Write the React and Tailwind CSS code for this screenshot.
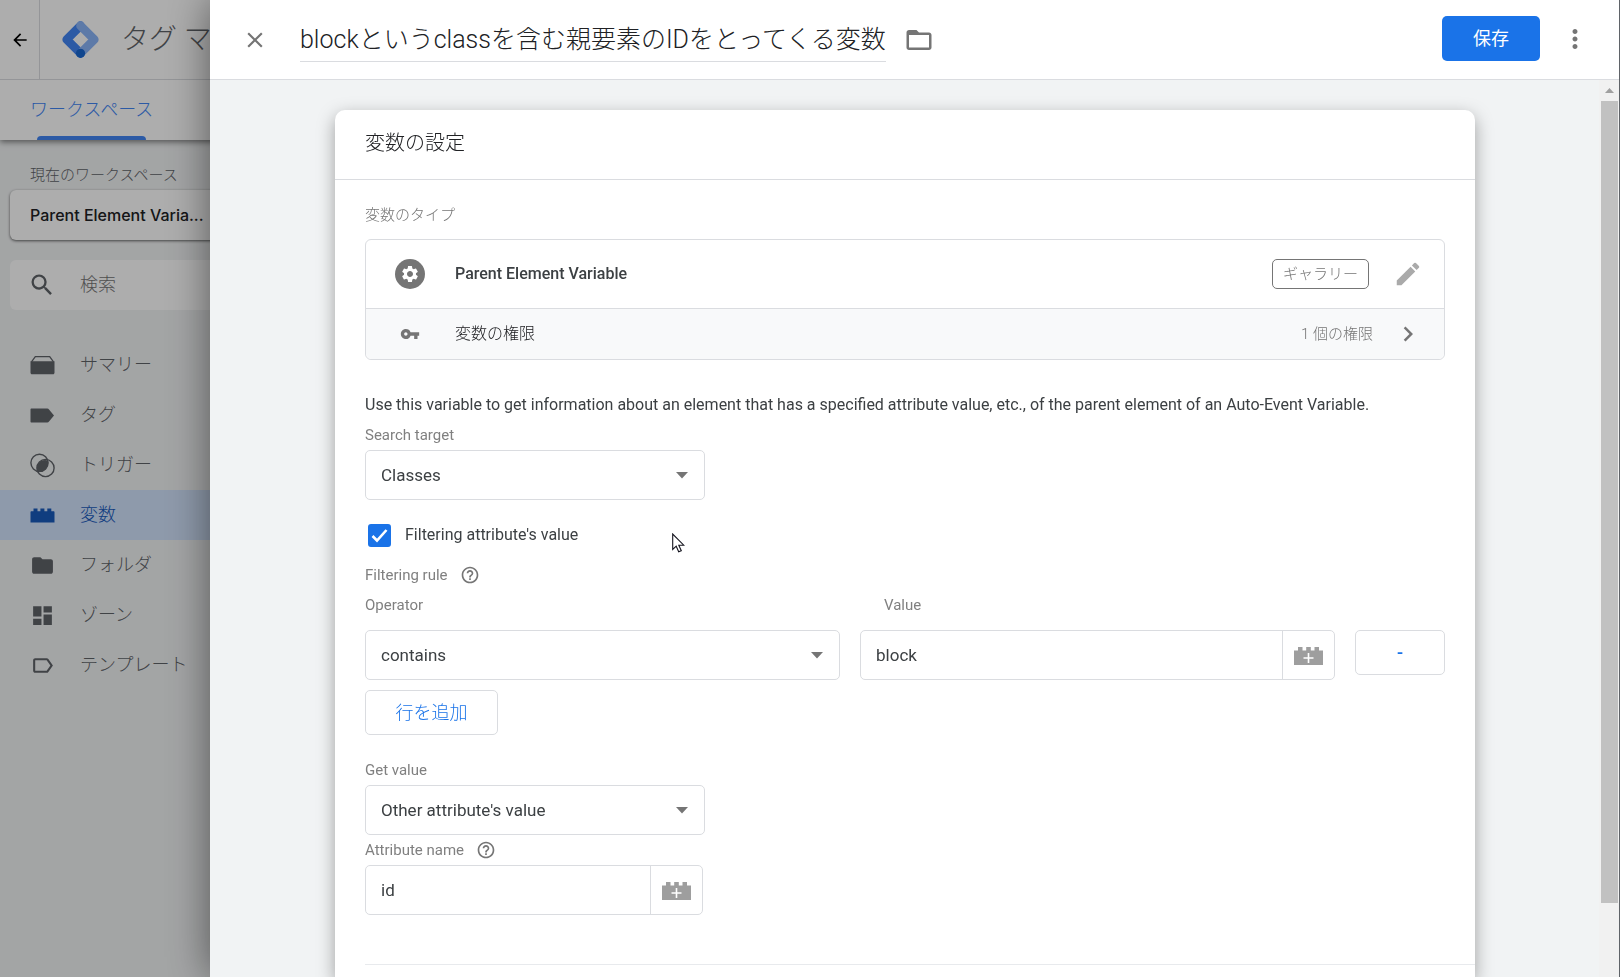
import { useState } from "react";
import {
  MdArrowBack,
  MdChevronRight,
  MdClose,
  MdDashboard,
  MdEdit,
  MdFolder,
  MdFolderOpen,
  MdHelpOutline,
  MdLabelOutline,
  MdMoreVert,
  MdSearch,
  MdSettings,
  MdVpnKey,
} from "react-icons/md";

const TagManagerLogo = () => (
  <svg width="41" height="41" viewBox="0 0 38 38" fill="none" strokeWidth="8" strokeLinecap="round" strokeLinejoin="round" aria-hidden="true">
    <path d="M19 6.2 6.2 19 19 31.8" stroke="#4285f4" />
    <path d="M19 6.2 31.8 19 19 31.8" stroke="#8ab4f8" />
    <circle cx="19" cy="31.8" r="4.300" fill="#1967d2" />
  </svg>
);

const SummaryIcon = () => (
  <svg width="25" height="25" viewBox="0 0 25 25" aria-hidden="true">
    <path d="M1.500 8.800 5.300 3.700h14.400l3.800 5.100" fill="none" stroke="currentColor" strokeWidth="1.300" />
    <path d="M.5 8.300h24v11.400c0 .9-.6 1.500-1.500 1.500H2c-.9 0-1.500-.6-1.500-1.500z" fill="currentColor" />
  </svg>
);

const TagIcon = () => (
  <svg width="25" height="25" viewBox="0 0 25 25" aria-hidden="true">
    <path d="M.5 6.500c0-.6.4-1 1-1h15.800c.7 0 1.300.3 1.700.9l5 6.100-5 6.100c-.4.600-1 .9-1.700.9H1.500c-.6 0-1-.4-1-1z" fill="currentColor" />
  </svg>
);

const TriggerIcon = () => (
  <svg width="25" height="25" viewBox="0 0 25 25" aria-hidden="true">
    <g fill="none" stroke="currentColor" strokeWidth="1.400">
      <circle cx="9.500" cy="9.800" r="8.600" />
      <circle cx="15.500" cy="15" r="8.600" />
    </g>
    <path d="M18 7.500c.8 4.200-.7 8.200-4.500 10.500-2.200.9-4.500.9-6.500.2-.6-4.400 1-8.200 4.200-10.400 2.200-1 4.700-1.100 6.800-.3z" fill="currentColor" />
  </svg>
);

const BrickIcon = () => (
  <svg width="25" height="25" viewBox="0 0 25 25" aria-hidden="true">
    <path d="M.5 9.200c0-.6.4-1 1-1H3.500V5.400h4v2.800h2.900V5.400h4v2.800h2.900V5.400h4v2.800h2.200c.6 0 1 .4 1 1V19.400H.5z" fill="currentColor" />
  </svg>
);

const BrickPlusIcon = () => (
  <svg width="29" height="18" viewBox="0 0 29 18" aria-hidden="true">
    <path d="M0 3.500h4V0h4.500v3.500h3.700V0h4.600v3.500h3.700V0H25v3.500h4V18H0z" fill="#9e9e9e" />
    <path d="M14.500 6v10M9.500 11h10" stroke="#fff" strokeWidth="1.600" />
  </svg>
);

const NAV = [
  { label: "サマリー", icon: SummaryIcon },
  { label: "タグ", icon: TagIcon },
  { label: "トリガー", icon: TriggerIcon },
  { label: "変数", icon: BrickIcon, active: true },
  { label: "フォルダ", icon: MdFolder },
  { label: "ゾーン", icon: MdDashboard },
  { label: "テンプレート", icon: MdLabelOutline },
];

const Workspace = () => (
  <div className="flex h-full flex-col bg-[#f1f3f4]">
    <header className="relative bg-white shadow-[0_2px_6px_rgba(0,0,0,0.5)]">
      <div className="flex h-20 items-center border-b border-[#dadce0]">
        <button type="button" aria-label="戻る" className="flex h-full w-10 shrink-0 items-center justify-center border-r border-[#dadce0] text-black">
          <MdArrowBack size={20} />
        </button>
        <div className="flex items-center gap-5 whitespace-nowrap pl-5">
          <TagManagerLogo />
          <span className="text-[28px] font-light text-[#5f6368]">タグ マネージャー</span>
        </div>
      </div>
      <nav className="flex h-[60px] px-[30px]">
        <a href="#workspace" className="flex flex-col items-center justify-between whitespace-nowrap text-lg font-light text-[#4285f4]">
          <span className="pt-4">ワークスペース</span>
          <span className="h-1 w-[109px] rounded-t bg-[#4285f4]" />
        </a>
      </nav>
    </header>

    <aside className="w-[300px] pt-5">
      <p className="flex h-[30px] items-center px-[30px] text-[15px] font-light text-[#5f6368]">現在のワークスペース</p>
      <div className="px-2.5">
        <button type="button" className="flex h-[50px] w-full items-center whitespace-nowrap rounded-md bg-white px-5 font-['Inter','Roboto',sans-serif] text-base font-medium text-[#202124] shadow-[0_1px_3px_rgba(0,0,0,0.6)]">
          Parent Element Varia...
        </button>
        <label className="mt-5 flex h-[50px] items-center gap-6 rounded-md bg-white pl-[18px] text-[#5f6368]">
          <MdSearch size={28} className="shrink-0" />
          <input type="text" aria-label="検索" placeholder="検索" className="min-w-0 flex-1 bg-transparent text-lg font-light outline-none placeholder:text-[#757575]" />
        </label>
      </div>
      <ul className="mt-[30px]">
        {NAV.map(({ label, icon: Icon, active }) => (
          <li key={label}>
            <a
              href="#nav"
              className={
                active
                  ? "flex h-[50px] items-center gap-[25px] bg-[#d2e3fc] px-[30px] text-lg font-light text-[#185abc]"
                  : "flex h-[50px] items-center gap-[25px] px-[30px] text-lg font-light text-[#5f6368]"
              }
            >
              <Icon size={25} />
              {label}
            </a>
          </li>
        ))}
      </ul>
    </aside>
  </div>
);

const FieldLabel = ({ htmlFor, help, children }) => (
  <div className="flex h-[30px] items-center gap-3 text-[15px] text-[#808080]">
    <label htmlFor={htmlFor}>{children}</label>
    {help && (
      <button type="button" aria-label="ヘルプ" className="text-[#757575]">
        <MdHelpOutline size={20} />
      </button>
    )}
  </div>
);

const Select = ({ id, value }) => (
  <div className="relative">
    <select id={id} defaultValue={value} className="h-[50px] w-full appearance-none rounded-[5px] border border-[#dadce0] bg-white px-[15px] pt-0.5 text-[17px] text-[#3c4043] outline-none">
      <option>{value}</option>
    </select>
    <svg width="12" height="7" viewBox="0 0 12 7" className="pointer-events-none absolute right-[17px] top-[22px]" aria-hidden="true">
      <path d="M0 0h12L6 6.500z" fill="#757575" />
    </svg>
  </div>
);

const VariableInput = ({ id, value }) => (
  <div className="flex h-[50px] rounded-[5px] border border-[#dadce0]">
    <input id={id} type="text" defaultValue={value} className="min-w-0 flex-1 bg-transparent px-[15px] pt-0.5 text-[17px] text-[#3c4043] outline-none" />
    <button type="button" aria-label="変数を選択" className="flex w-[52px] items-center justify-center border-l border-[#dadce0] pt-0.5">
      <BrickPlusIcon />
    </button>
  </div>
);

const DrawerHeader = () => (
  <header className="flex h-20 shrink-0 items-center border-b border-[#dadce0] bg-white pb-0.5 pl-8 pr-[29px]">
    <button type="button" aria-label="閉じる" className="pt-0.5 text-[#757575]">
      <MdClose size={26} />
    </button>
    <input
      type="text"
      aria-label="変数名"
      defaultValue="blockというclassを含む親要素のIDをとってくる変数"
      className="ml-8 h-[47px] border-b border-[#dadce0] pb-0.5 text-[25px] font-light text-[#202124] outline-none field-sizing-content"
    />
    <button type="button" aria-label="フォルダに移動" className="ml-[18px] pt-0.5 text-[#757575]">
      <MdFolderOpen size={30} />
    </button>
    <button type="button" className="ml-auto h-[45px] w-[98px] rounded-[5px] bg-[#1a73e8] text-lg text-white">保存</button>
    <button type="button" aria-label="その他の操作" className="ml-5 text-[#757575]">
      <MdMoreVert size={30} />
    </button>
  </header>
);

const TypeBox = () => (
  <div className="mt-[9px] rounded-md border border-[#dadce0]">
    <div className="flex h-[68px] items-center px-[29px]">
      <span className="flex size-[30px] items-center justify-center rounded-full bg-[#757575] text-white">
        <MdSettings size={20} />
      </span>
      <span className="ml-[30px] text-base font-medium text-[#3c4043]">Parent Element Variable</span>
      <span className="ml-auto flex h-[30px] items-center rounded-[5px] border border-[#757575] px-2.5 text-[15px] font-light text-[#757575]">ギャラリー</span>
      <button type="button" aria-label="編集" className="-mr-2 ml-6 text-[#aaa]">
        <MdEdit size={30} />
      </button>
    </div>
    <button type="button" className="flex h-[51px] w-full items-center rounded-b-md border-t border-[#dadce0] bg-[#f8f9fa] px-[29px] text-left">
      <span className="flex w-[30px] justify-center text-[#757575]">
        <MdVpnKey size={20} />
      </span>
      <span className="ml-[30px] text-base font-light text-[#202124]">変数の権限</span>
      <span className="ml-auto text-[15px] font-light text-[#757575]">1 個の権限</span>
      <MdChevronRight size={30} className="-mr-2 ml-5 text-[#757575]" />
    </button>
  </div>
);

const Scrollbar = () => (
  <div className="flex w-5 shrink-0 flex-col bg-[#f1f1f1] pl-0.5 pr-px" aria-hidden="true">
    <div className="flex h-[21px] shrink-0 items-center justify-center">
      <svg width="9" height="5" viewBox="0 0 9 5">
        <path d="M0 5h9L4.500 0z" fill="#a0a0a0" />
      </svg>
    </div>
    <div className="flex-[802] bg-[#c1c1c1]" />
    <div className="flex-[74]" />
  </div>
);

const VariableDrawer = () => {
  const [filtering, setFiltering] = useState(true);

  return (
    <section className="flex min-w-0 flex-1 flex-col border-r border-[#5f6368] bg-[#f1f3f4] shadow-[0_0_40px_rgba(0,0,0,0.5)]">
      <DrawerHeader />
      <div className="flex min-h-0 flex-1">
        <main className="flex min-w-0 flex-1 flex-col overflow-hidden pl-[125px] pr-[124px] pt-[30px]">
          <div className="flex-1 shrink-0 rounded-t-[10px] bg-white shadow-[0_6px_18px_rgba(0,0,0,0.35)]">
            <h2 className="flex h-[70px] items-center border-b border-[#dadce0] px-[30px] pb-1 text-xl font-light text-[#202124]">変数の設定</h2>
            <div className="pl-[30px]">
              <div className="pr-[30px] pt-5">
                <p className="flex h-[30px] items-center text-[15px] font-light text-[#757575]">変数のタイプ</p>
                <TypeBox />
                <p className="mt-[30px] flex h-[30px] items-center text-base text-[#3c4043]">
                  Use this variable to get information about an element that has a specified attribute value, etc., of the parent element of an Auto-Event Variable.
                </p>

                <FieldLabel htmlFor="search-target">Search target</FieldLabel>
                <div className="w-[340px]">
                  <Select id="search-target" value="Classes" />
                </div>

                <div className="relative mt-2.5 flex h-[50px] items-center gap-3.5 pl-[3px]">
                  <span className="relative flex">
                    <input
                      id="filtering"
                      type="checkbox"
                      checked={filtering}
                      onChange={(e) => setFiltering(e.target.checked)}
                      className="peer size-[23px] appearance-none rounded-[3px] border-2 border-[#757575] checked:border-[#1a73e8] checked:bg-[#1a73e8]"
                    />
                    <svg width="23" height="23" viewBox="0 0 23 23" className="pointer-events-none absolute inset-0 hidden peer-checked:block" aria-hidden="true">
                      <path d="m4.500 12 4.500 4.500L18.500 6" fill="none" stroke="#fff" strokeWidth="2.600" />
                    </svg>
                  </span>
                  <label htmlFor="filtering" className="text-base text-[#3c4043]">Filtering attribute's value</label>
                  {/* mouse pointer */}
                  <svg width="13" height="20" viewBox="0 0 13 20" className="pointer-events-none absolute left-[307px] top-[23px]" aria-hidden="true">
                    <path d="M.7 1v15.500l3.500-3.300 2.500 5.600 2.600-1.100-2.500-5.500h5z" fill="#fff" stroke="#14141e" strokeWidth="1.100" />
                  </svg>
                </div>

                <FieldLabel htmlFor="operator" help>Filtering rule</FieldLabel>
                <div className="grid grid-cols-[1fr_1fr_90px] gap-x-5">
                  <FieldLabel htmlFor="operator">Operator</FieldLabel>
                  <div className="pl-6">
                    <FieldLabel htmlFor="value">Value</FieldLabel>
                  </div>
                </div>
                <div className="mt-2.5 grid grid-cols-[1fr_1fr_90px] gap-x-5">
                  <Select id="operator" value="contains" />
                  <VariableInput id="value" value="block" />
                  <button type="button" aria-label="行を削除" className="h-[45px] rounded-[5px] border border-[#dadce0] text-lg font-medium text-[#1a73e8]">-</button>
                </div>
                <button type="button" className="mt-2.5 h-[45px] w-[133px] rounded-[5px] border border-[#dadce0] text-lg font-light text-[#1a73e8]">行を追加</button>

                <div className="mt-5 w-[340px]">
                  <FieldLabel htmlFor="get-value">Get value</FieldLabel>
                  <Select id="get-value" value="Other attribute's value" />
                </div>
                <div className="w-[338px]">
                  <FieldLabel htmlFor="attribute-name" help>Attribute name</FieldLabel>
                  <VariableInput id="attribute-name" value="id" />
                </div>
              </div>
              <hr className="mt-[49px] border-[#e8eaed]" />
            </div>
          </div>
        </main>
        <Scrollbar />
      </div>
    </section>
  );
};

export default function App() {
  return (
    <div className="h-screen overflow-hidden font-['Roboto','Noto_Sans_CJK_JP',sans-serif]">
      <Workspace />
      <div className="fixed inset-0 flex bg-black/32 pl-[210px]">
        <VariableDrawer />
      </div>
    </div>
  );
}
